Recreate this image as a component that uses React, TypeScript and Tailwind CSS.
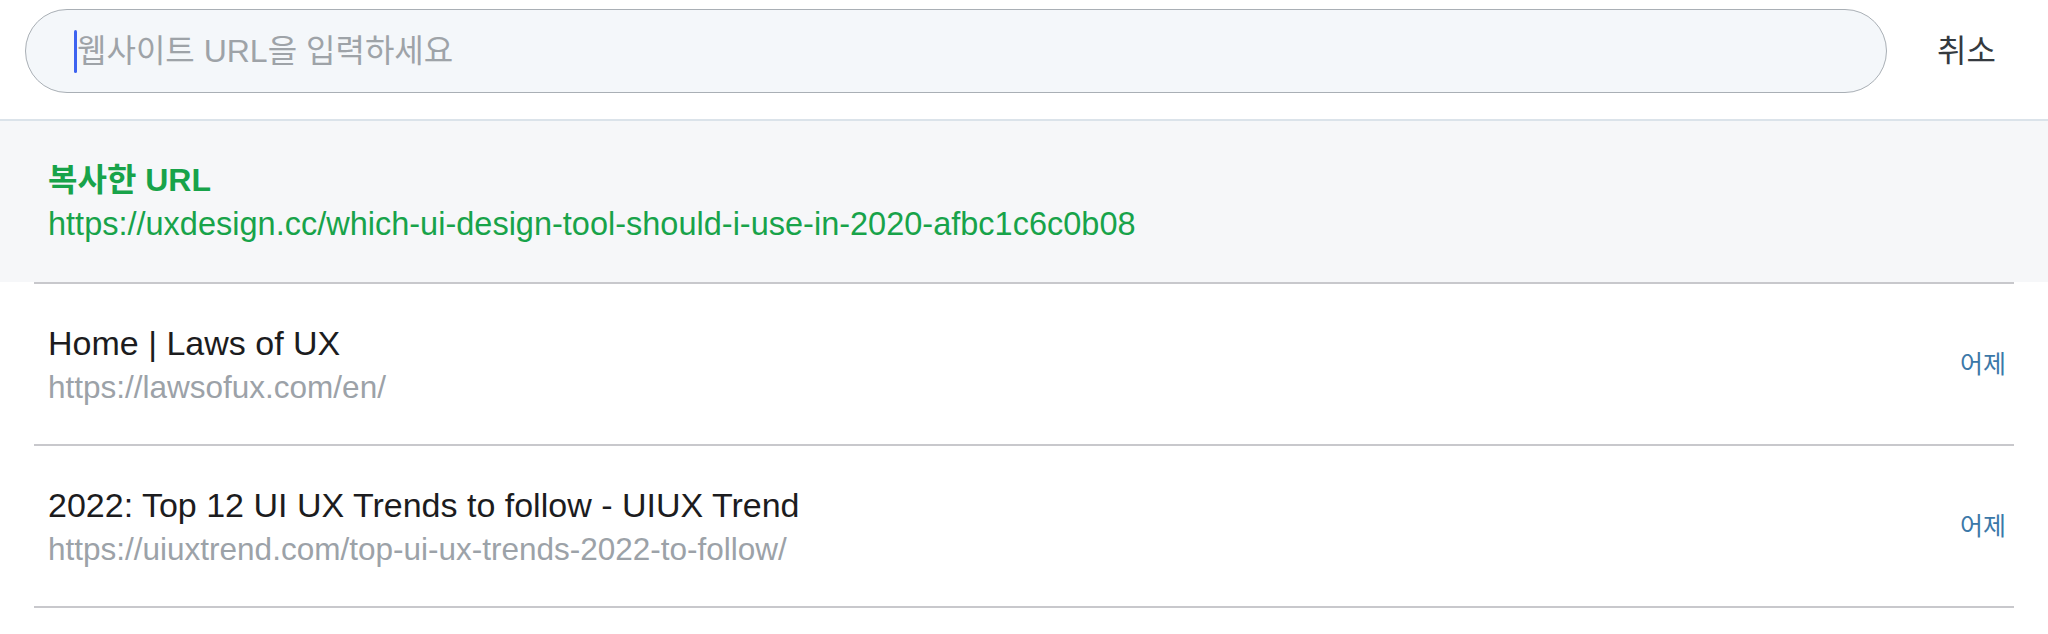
import React from 'react';

interface HistoryItem {
  title: string;
  url: string;
  when: string;
}

const history: HistoryItem[] = [
  { title: 'Home | Laws of UX', url: 'https://lawsofux.com/en/', when: '어제' },
  {
    title: '2022: Top 12 UI UX Trends to follow - UIUX Trend',
    url: 'https://uiuxtrend.com/top-ui-ux-trends-2022-to-follow/',
    when: '어제',
  },
];

const App: React.FC = () => {
  return (
    <div className="w-[2048px] h-[634px] bg-white overflow-hidden font-['Liberation_Sans','Noto_Sans_CJK_KR',sans-serif]">
      {/* 검색 헤더 */}
      <div className="flex items-center gap-[50px] pl-[25px] pr-[52px] pt-[9px] pb-[26px]">
        <div className="flex-1 h-[84px] rounded-full border border-[#a9afb5] bg-[#f4f7fa] flex items-center pl-[48px]">
          <div className="w-[3px] h-[43px] rounded-sm bg-[#3d63f0]" />
          <span className="text-[32px] leading-none text-[#9ea3a8]">웹사이트 URL을 입력하세요</span>
        </div>
        <button className="text-[32px] leading-none text-[#353a3f]">취소</button>
      </div>

      {/* 복사한 URL */}
      <div className="h-[163px] border-t-2 border-[#dbe3ea] bg-[#f6f7f9] flex flex-col justify-center pl-[48px]">
        <p className="text-[32px] leading-[38px] font-bold text-[#18a34a]">복사한 URL</p>
        <p className="text-[32.5px] leading-[38px] mt-[6px] text-[#18a34a]">
          https://uxdesign.cc/which-ui-design-tool-should-i-use-in-2020-afbc1c6c0b08
        </p>
      </div>

      {/* 방문 기록 */}
      <div className="mx-[34px] border-t-2 border-[#c8c8cc]">
        {history.map((item, i) => (
          <div
            key={i}
            className="h-[162px] border-b-2 border-[#c8c8cc] flex items-center justify-between pl-[14px] pr-[8px]"
          >
            <div className="flex flex-col">
              <span className="text-[34px] leading-[44px] text-[#1c1c1e]">{item.title}</span>
              <span className="text-[31.5px] leading-[40px] mt-[2px] text-[#9ca2a8]">{item.url}</span>
            </div>
            <span className="text-[25px] leading-none text-[#3b78a8]">{item.when}</span>
          </div>
        ))}
      </div>
    </div>
  );
};

export default App;
